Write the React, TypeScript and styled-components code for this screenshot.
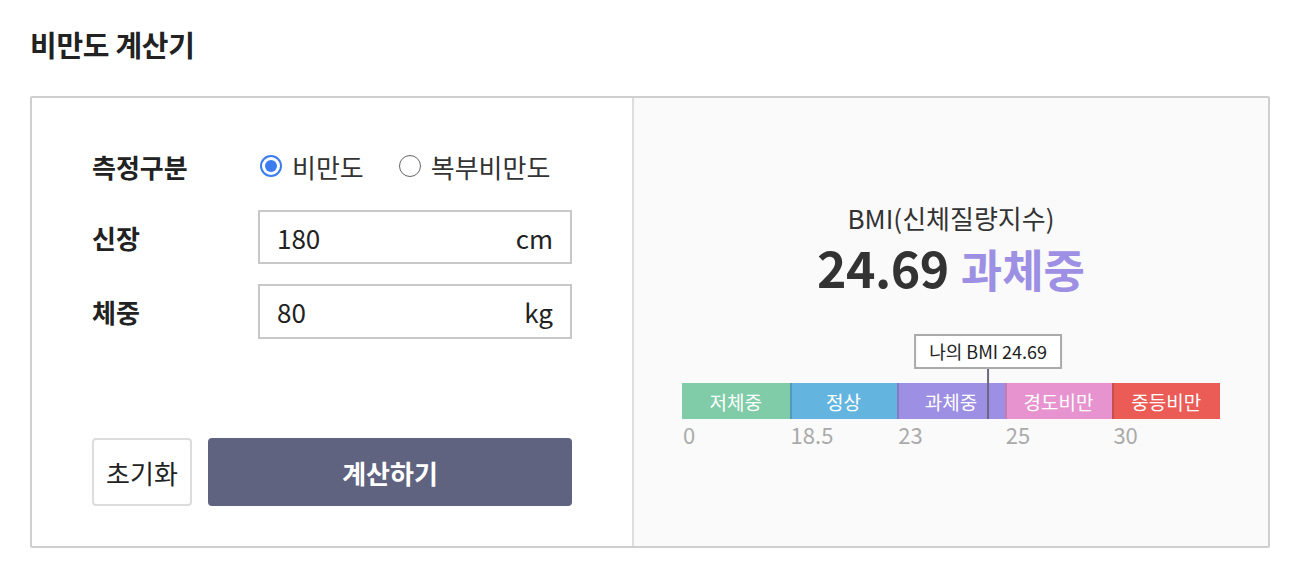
import React, { useState } from 'react'
import styled, { createGlobalStyle } from 'styled-components'

const GlobalStyle = createGlobalStyle`
  html, body {
    margin: 0;
    padding: 0;
    background: #fff;
  }
  body {
    font-family: "Noto Sans CJK KR", "Noto Sans", sans-serif;
    color: #222;
  }
  * {
    box-sizing: border-box;
  }
`

const ranges = [
  { name: '저체중', from: 0, to: 18.5, color: '#80cba8' },
  { name: '정상', from: 18.5, to: 23, color: '#63b5df' },
  { name: '과체중', from: 23, to: 25, color: '#9d8fe3' },
  { name: '경도비만', from: 25, to: 30, color: '#e693cf' },
  { name: '중등비만', from: 30, to: 35, color: '#eb5c57' },
]

// each range takes the same width on the scale, so place the marker inside its range
const markerPercent = (bmi: number) => {
  const idx = ranges.findIndex((r) => bmi >= r.from && bmi < r.to)
  const i = idx < 0 ? ranges.length - 1 : idx
  const r = ranges[i]
  const inner = Math.min(1, (bmi - r.from) / (r.to - r.from))
  return ((i + inner) / ranges.length) * 100
}

const App: React.FC = () => {
  const [mode, setMode] = useState<'bmi' | 'waist'>('bmi')
  const [height, setHeight] = useState('180')
  const [weight, setWeight] = useState('80')

  const h = Number(height) / 100
  const bmi = h > 0 ? Math.round((Number(weight) / (h * h)) * 100) / 100 : 0
  const current = ranges.find((r) => bmi >= r.from && bmi < r.to) || ranges[ranges.length - 1]

  return (
    <Page>
      <GlobalStyle />
      <Title>비만도 계산기</Title>
      <Calculator>
        <FormPanel>
          <Fields>
            <FieldRow $height={44}>
              <FieldLabel>측정구분</FieldLabel>
              <RadioGroup>
                <RadioOption onClick={() => setMode('bmi')}>
                  <RadioDot $checked={mode === 'bmi'} />
                  비만도
                </RadioOption>
                <RadioOption onClick={() => setMode('waist')}>
                  <RadioDot $checked={mode === 'waist'} />
                  복부비만도
                </RadioOption>
              </RadioGroup>
            </FieldRow>
            <FieldRow $height={54} $gap={22}>
              <FieldLabel>신장</FieldLabel>
              <InputBox>
                <ValueInput value={height} onChange={(e) => setHeight(e.target.value)} />
                <Unit>cm</Unit>
              </InputBox>
            </FieldRow>
            <FieldRow $height={55} $gap={20}>
              <FieldLabel>체중</FieldLabel>
              <InputBox>
                <ValueInput value={weight} onChange={(e) => setWeight(e.target.value)} />
                <Unit>kg</Unit>
              </InputBox>
            </FieldRow>
          </Fields>
          <ButtonRow>
            <ResetButton>초기화</ResetButton>
            <SubmitButton>계산하기</SubmitButton>
          </ButtonRow>
        </FormPanel>

        <ResultPanel>
          <ResultCaption>BMI(신체질량지수)</ResultCaption>
          <ResultValue>
            <ResultNumber>{bmi.toFixed(2)}</ResultNumber>
            <ResultGrade $color={current.color}>{current.name}</ResultGrade>
          </ResultValue>
          <Scale>
            <Marker style={{ left: `${markerPercent(bmi)}%` }}>
              <MarkerTip>나의 BMI {bmi.toFixed(2)}</MarkerTip>
              <MarkerStem />
            </Marker>
            <Bar>
              {ranges.map((r, i) => (
                <Segment key={r.name} $color={r.color} $first={i === 0}>
                  {r.name}
                </Segment>
              ))}
            </Bar>
            <Ticks>
              {ranges.map((r) => (
                <Tick key={r.name}>{r.from}</Tick>
              ))}
            </Ticks>
          </Scale>
        </ResultPanel>
      </Calculator>
    </Page>
  )
}

const Page = styled.div`
  padding: 25px 30px 28px;
  width: 1302px;
`

const Title = styled.h1`
  margin: 0 0 33px;
  font-size: 29px;
  line-height: 38px;
  font-weight: 700;
  color: #222;
  letter-spacing: -0.3px;
`

const Calculator = styled.div`
  display: flex;
  width: 1240px;
  height: 452px;
  border: 2px solid #cfcfcf;
  border-radius: 2px;
`

const FormPanel = styled.div`
  display: flex;
  flex-direction: column;
  width: 602px;
  padding: 46px 60px 40px;
  background: #fff;
  border-right: 2px solid #dedede;
`

const Fields = styled.div`
  display: flex;
  flex-direction: column;
`

const FieldRow = styled.div<{ $height: number; $gap?: number }>`
  display: grid;
  grid-template-columns: 166px 314px;
  align-items: center;
  height: ${(p) => p.$height}px;
  margin-top: ${(p) => p.$gap || 0}px;
`

const FieldLabel = styled.div`
  font-size: 26px;
  font-weight: 700;
  color: #222;
`

const RadioGroup = styled.div`
  display: flex;
  align-items: center;
  gap: 35px;
  padding-left: 2px;
`

const RadioOption = styled.label`
  display: flex;
  align-items: center;
  gap: 10px;
  font-size: 26px;
  color: #333;
  cursor: pointer;
`

const RadioDot = styled.span<{ $checked: boolean }>`
  position: relative;
  flex: none;
  width: 22px;
  height: 22px;
  border-radius: 50%;
  border: ${(p) => (p.$checked ? '2px solid #3b7cf0' : '1.5px solid #666')};
  background: #fff;

  &::after {
    content: '';
    display: ${(p) => (p.$checked ? 'block' : 'none')};
    position: absolute;
    top: 3px;
    left: 3px;
    width: 12px;
    height: 12px;
    border-radius: 50%;
    background: #3b7cf0;
  }
`

const InputBox = styled.div`
  display: flex;
  align-items: center;
  width: 314px;
  height: 100%;
  border: 2px solid #c8c8c8;
  background: #fff;
  padding: 0 17px;
`

const ValueInput = styled.input`
  flex: 1;
  width: 0;
  min-width: 0;
  border: 0;
  outline: none;
  padding: 0;
  background: transparent;
  font-family: inherit;
  font-size: 26px;
  color: #222;
`

const Unit = styled.span`
  font-size: 26px;
  color: #222;
`

const ButtonRow = styled.div`
  display: flex;
  gap: 16px;
  margin-top: auto;
  width: 480px;
  height: 68px;
`

const ResetButton = styled.button`
  width: 100px;
  border: 2px solid #dcdcdc;
  border-radius: 4px;
  background: #fff;
  font-family: inherit;
  font-size: 26px;
  color: #222;
  cursor: pointer;
  padding: 0;
`

const SubmitButton = styled.button`
  flex: 1;
  border: 0;
  border-radius: 4px;
  background: #5f6380;
  font-family: inherit;
  font-size: 26px;
  font-weight: 700;
  color: #fff;
  cursor: pointer;
`

const ResultPanel = styled.div`
  flex: 1;
  display: flex;
  flex-direction: column;
  align-items: center;
  justify-content: center;
  padding: 4px 48px 0;
  background: #fafafa;
`

const ResultCaption = styled.div`
  font-size: 26px;
  line-height: 36px;
  color: #333;
`

const ResultValue = styled.div`
  display: flex;
  align-items: baseline;
  gap: 12px;
  height: 60px;
  line-height: 60px;
  margin-bottom: 38px;
`

const ResultNumber = styled.span`
  font-size: 50px;
  font-weight: 700;
  color: #333;
  letter-spacing: -0.5px;
`

const ResultGrade = styled.span<{ $color: string }>`
  font-size: 45px;
  font-weight: 700;
  color: ${(p) => p.$color};
`

const Scale = styled.div`
  position: relative;
  width: 100%;
  padding-top: 49px;
`

const Marker = styled.div`
  position: absolute;
  top: 0;
  z-index: 2;
  display: flex;
  flex-direction: column;
  align-items: center;
  transform: translateX(-50%);
`

const MarkerTip = styled.div`
  height: 35px;
  padding: 0 13px;
  border: 2px solid #aaa;
  background: #fff;
  font-size: 18px;
  line-height: 31px;
  color: #222;
  white-space: nowrap;
`

const MarkerStem = styled.div`
  width: 2px;
  height: 50px;
  background: #6c6880;
`

const Bar = styled.div`
  display: flex;
  height: 36px;
`

const Segment = styled.div<{ $color: string; $first: boolean }>`
  flex: 1;
  display: flex;
  align-items: center;
  justify-content: center;
  background: ${(p) => p.$color};
  box-shadow: ${(p) => (p.$first ? 'none' : 'inset 2px 0 0 rgba(0, 0, 0, 0.15)')};
  font-size: 19px;
  color: #fff;
`

const Ticks = styled.div`
  display: flex;
  padding-top: 1px;
`

const Tick = styled.div`
  flex: 1;
  padding-left: 1px;
  font-size: 22px;
  line-height: 28px;
  color: #aaa;
`

export default App
